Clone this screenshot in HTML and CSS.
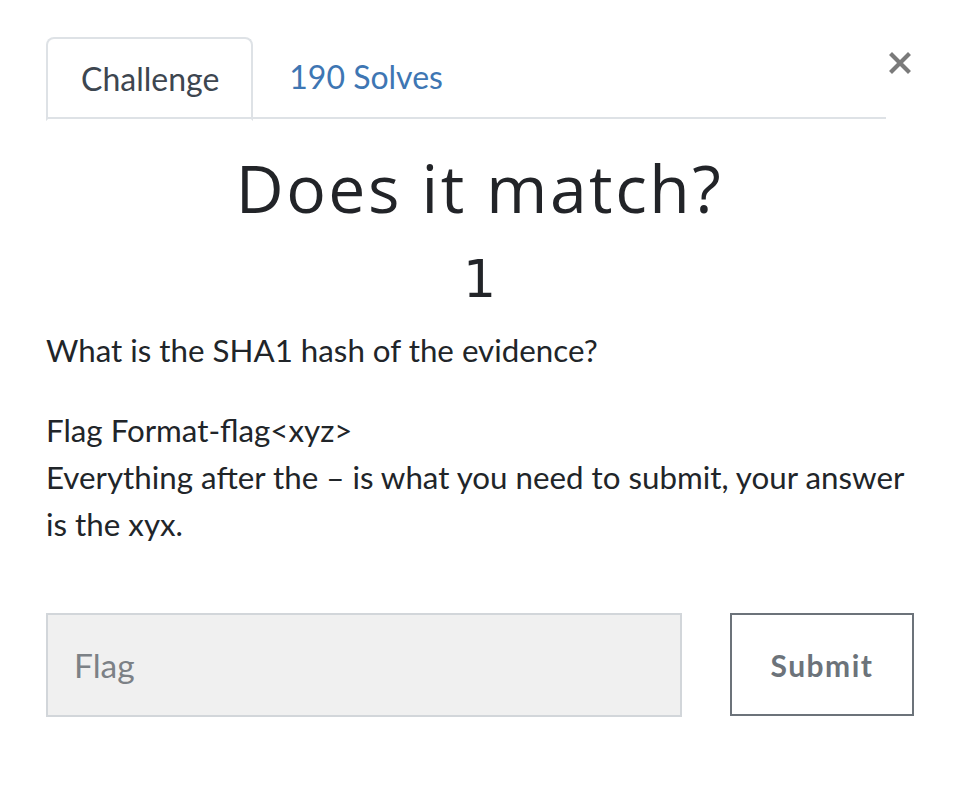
FILE: index.html
```html
<!DOCTYPE html>
<html>
<head>
<meta charset="utf-8">
<link rel="stylesheet" href="styles.css">
</head>
<body>
<div class="modal">
  <div class="header">
    <ul class="tabs">
      <li class="tab active">Challenge</li>
      <li class="tab link">190 Solves</li>
    </ul>
    <button class="close" aria-label="Close">
      <svg width="22" height="22" viewBox="0 0 22 22"><path d="M3 3 L19 19 M19 3 L3 19" stroke="#7a7a7a" stroke-width="4.2" stroke-linecap="square"/></svg>
    </button>
  </div>
  <h2 class="title">Does it match?</h2>
  <h3 class="value">1</h3>
  <div class="desc">
    <p>What is the SHA1 hash of the evidence?</p>
    <p>Flag Format-flag&lt;xyz&gt;<br>Everything after the – is what you need to submit, your answer is the xyx.</p>
  </div>
  <form class="submit-row">
    <input class="flag" type="text" placeholder="Flag">
    <button class="btn" type="button">Submit</button>
  </form>
</div>
</body>
</html>
```
FILE: styles.css
```css
html, body { margin: 0; padding: 0; background: #fff; }
body { font-family: Lato, "Open Sans", sans-serif; color: #212529; }
.modal { padding: 37px 61px 0 46px; width: 867px; }
.header { display: flex; align-items: flex-start; }
.tabs { list-style: none; margin: 0; padding: 0; display: flex; flex: 0 0 840px; border-bottom: 2px solid #dee2e6; height: 82px; box-sizing: border-box; }
.tab { font-size: 32px; line-height: 80px; }
.tab.active { border: 2px solid #dee2e6; border-bottom: 2px solid #fff; border-radius: 8px 8px 0 0; color: #3d4650; margin-bottom: -2px; height: 80px; padding: 0 32px 0 33px; }
.tab.link { color: #3e76b3; padding-left: 36px; }
.close { margin: 15px 0 0 3px; padding: 0; border: 0; background: none; width: 22px; height: 22px; }
.close svg { display: block; }
.title { margin: 28px 0 0; text-align: center; font-weight: 400; font-size: 66px; letter-spacing: 2.5px; line-height: 80px; font-family: "Open Sans", Lato, sans-serif; color: #222428; }
.value { margin: 12px 0 0; text-align: center; font-weight: 400; font-size: 52px; line-height: 80px; font-family: "DejaVu Sans", "Open Sans", sans-serif; color: #222428; }
.desc { margin-top: 8px; width: 872px; }
.desc p { margin: 0 0 33px; font-size: 31.3px; line-height: 47px; color: #212529; }
.submit-row { display: flex; justify-content: space-between; margin-top: 65px; width: 868px; }
.flag { width: 636px; height: 104px; box-sizing: border-box; background: #f0f0f0; border: 2px solid #d2d6da; padding: 0 26px; font-family: Lato, sans-serif; font-size: 33.5px; color: #495057; outline: none; }
.flag::placeholder { color: #7c8186; }
.btn { width: 184px; height: 103px; box-sizing: border-box; background: #fff; border: 2px solid #6c737a; font-family: Lato, sans-serif; font-weight: 700; font-size: 30px; letter-spacing: 1.5px; color: #6c737a; padding: 0; }
```
